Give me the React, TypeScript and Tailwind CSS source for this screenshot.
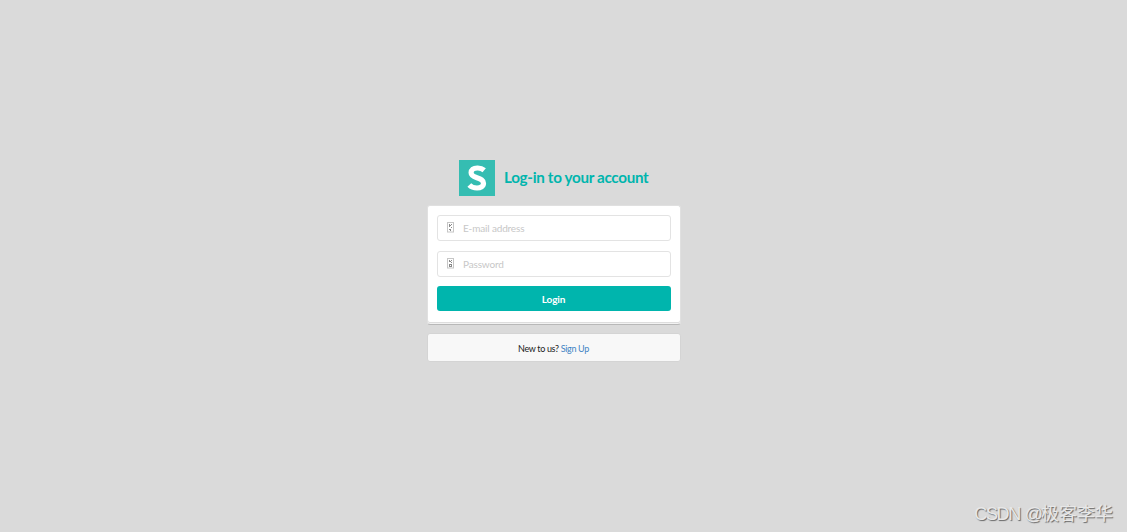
import React from 'react';

function MissingGlyph({ rows }: { rows: string[] }) {
  return (
    <svg className="mt-[6px] ml-[9px] h-[11px] w-[7px] shrink-0" viewBox="0 0 7 11" fill="none">
      <rect x="0.5" y="0.5" width="6" height="9.5" stroke="#c6c6c6" />
      {rows.map((d) => (
        <path key={d} d={d} stroke="#8a8a8a" strokeWidth="1" />
      ))}
    </svg>
  );
}

function Field({ type, placeholder, rows }: { type: string; placeholder: string; rows: string[] }) {
  return (
    <div className="flex h-[26px] shrink-0 rounded-[3px] border border-[#e3e3e3] bg-white">
      <MissingGlyph rows={rows} />
      <input
        type={type}
        placeholder={placeholder}
        className="ml-[9.5px] h-[24px] min-w-0 flex-1 bg-transparent pb-px text-[10px] tracking-[-0.16px] outline-none placeholder:text-[#c7c7c7]"
      />
    </div>
  );
}

export default function App() {
  return (
    <div className="flex h-[532px] w-[1128px] flex-col border-r border-white bg-[#dadada] font-['Lato',sans-serif]">
      <main className="ml-[426.5px] w-[254px] pt-[160px]">
        <h2 className="flex h-[36px] items-center justify-center text-[15.2px] font-bold tracking-[-0.31px] text-[#00b5ad]">
          <svg className="h-[36px] w-[36px]" viewBox="0 0 36 36">
            <rect width="36" height="36" fill="#35bdb2" />
            <path
              d="M25.2 10.2C23.3 8.6 20.8 7.9 18.3 8C14.3 8.1 12.1 10 12.1 12.8C12.1 15.6 14.3 16.6 17.9 17.8C21.9 19.1 24.5 20.2 24.5 23.3C24.5 26.4 21.6 28 18 28C14.9 28 12.2 27 10.3 25"
              fill="none"
              stroke="white"
              strokeWidth="5.2"
            />
          </svg>
          <span className="ml-[9.5px] -mt-px whitespace-nowrap">Log-in to your account</span>
        </h2>

        {/* Login form */}
        <form className="mt-[9px]" onSubmit={(e) => e.preventDefault()}>
          <div className="flex h-[120px] flex-col rounded-[3px] border border-[#e0e0e0] border-b-[#b8b8b8] bg-white px-[9px] pt-[9px] shadow-[inset_0_-1px_0_#f2f2f2,inset_0_-2px_0_#dddddd]">
            <Field type="email" placeholder="E-mail address" rows={['M2 2.5h1M4 2.5h1M2 3.5h2', 'M2 4.5h1M4 5.5h1', 'M2 7.5h2M3 8.5h1']} />
            <div className="h-[10px] shrink-0" />
            <Field type="password" placeholder="Password" rows={['M2 2.5h1M4 2.5h1M2 3.5h2', 'M4 4.5h1M2 6.5h3', 'M2 7.5h1M4 7.5h1M2 8.5h3']} />
            <button
              type="submit"
              className="mt-[9px] h-[25px] shrink-0 rounded-[3px] bg-[#00b5ad] pt-px text-[10px] font-bold tracking-[-0.1px] text-white"
            >
              Login
            </button>
          </div>
        </form>

        <div className="mt-[8px] flex h-[29px] items-center justify-center rounded-[3px] border border-[#d4d4d4] bg-[#f8f8f8] pt-[3px] text-[9px] tracking-[-0.33px] text-[#212121]">
          <span>
            New to us? <a href="#" className="text-[#4183c4]">Sign Up</a>
          </span>
        </div>
      </main>

      <div className="mt-auto mr-[14px] mb-[5px] self-end font-['Liberation_Sans','Noto_Sans_CJK_SC',sans-serif] text-[18px] leading-[26px] text-[#e8e8e8] [text-shadow:1px_1px_1px_#666]">
        <span className="tracking-[-1.3px]">CSDN </span>
        <span className="ml-px tracking-[-2px]">@</span>极客李华
      </div>
    </div>
  );
}
